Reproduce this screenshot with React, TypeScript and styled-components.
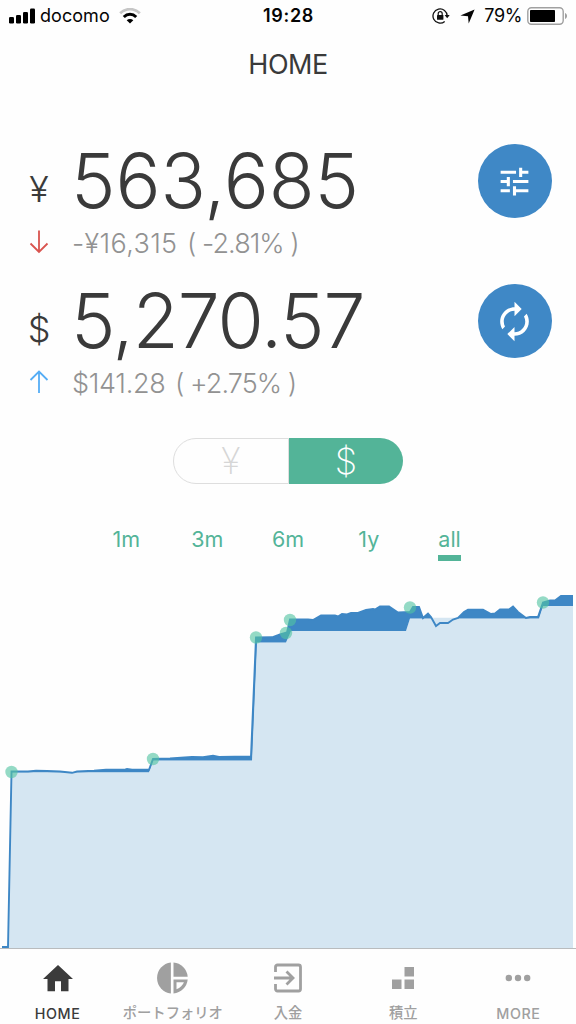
import React from "react";
import styled, { createGlobalStyle } from "styled-components";

const GlobalStyle = createGlobalStyle`
  * { box-sizing: border-box; }
  body { margin: 0; background: #fefefe; font-family: Inter, "Noto Sans CJK JP", sans-serif; }
`;

const Screen = styled.div`
  width: 576px;
  height: 1024px;
  display: flex;
  flex-direction: column;
  overflow: hidden;
  background: #fefefe;
  color: #3a3a3a;
`;

const StatusBar = styled.header`
  height: 32px;
  display: grid;
  grid-template-columns: 1fr auto 1fr;
  align-items: center;
  padding: 0 8px 0 9px;
  color: #050505;
  font-size: 18px;
  line-height: 32px;
`;
const StatusGroup = styled.div<{ $end?: boolean }>`
  display: flex;
  align-items: center;
  justify-content: ${(p) => (p.$end ? "flex-end" : "flex-start")};
  svg { display: block; flex: none; }
`;
const Carrier = styled.span`
  margin: 0 9px 0 5px;
  letter-spacing: 0.05px;
`;
const Clock = styled.span`
  font-weight: 600;
  letter-spacing: 0.7px;
`;
const Percent = styled.span`
  margin: 0 5px 0 9px;
  letter-spacing: -0.4px;
`;

const Title = styled.h1`
  margin: 0;
  height: 64px;
  font-size: 27px;
  font-weight: 400;
  line-height: 65px;
  text-align: center;
  letter-spacing: -0.5px;
`;

const Balances = styled.section`
  display: flex;
  flex-direction: column;
  padding: 44px 24.500px 0 24px;
`;
const Balance = styled.div`
  height: 140px;
  display: flex;
  justify-content: space-between;
`;
const Figures = styled.div`
  display: grid;
  grid-template-columns: 30px auto;
  grid-template-rows: 85px 36px;
  column-gap: 17px;
`;
const Currency = styled.span`
  font-size: 36px;
  font-weight: 300;
  line-height: 98px;
  text-align: center;
`;
const Amount = styled.span<{ $spacing: number }>`
  font-size: 75px;
  font-weight: 300;
  line-height: 82px;
  letter-spacing: ${(p) => p.$spacing}px;
  white-space: nowrap;
`;
const Trend = styled.svg`
  width: 20px;
  height: 24px;
  margin: 5px;
`;
const Change = styled.span<{ $spacing: number }>`
  font-size: 27px;
  font-weight: 300;
  line-height: 37px;
  padding-left: 1px;
  color: #929292;
  letter-spacing: ${(p) => p.$spacing}px;
  white-space: nowrap;
`;
const Rate = styled.span`
  margin-left: 9.500px;
  letter-spacing: -0.95px;
`;
const RoundButton = styled.button`
  width: 74px;
  height: 74px;
  margin-top: 4px;
  padding: 0;
  border: 0;
  border-radius: 50%;
  background: #3f88c6;
  display: flex;
  align-items: center;
  justify-content: center;
`;

const Switch = styled.div`
  height: 46px;
  margin: 18px 0 0 172.500px;
  display: grid;
  grid-template-columns: 116.500px 114px;
  flex: none;
`;
const SwitchHalf = styled.button<{ $on?: boolean }>`
  padding: 0;
  border: ${(p) => (p.$on ? "0" : "1.5px solid #dedede")};
  border-radius: ${(p) => (p.$on ? "0 23px 23px 0" : "23px 0 0 23px")};
  background: ${(p) => (p.$on ? "#53b498" : "#fefefe")};
  color: ${(p) => (p.$on ? "#fff" : "#d6d6d6")};
  font: 250 36px/44px Inter, sans-serif;
`;

const Ranges = styled.nav`
  height: 60px;
  margin-top: 35px;
  padding: 0 86px;
  display: grid;
  grid-template-columns: repeat(5, 1fr);
  justify-items: center;
  align-items: start;
  flex: none;
`;
const Range = styled.a<{ $on?: boolean }>`
  height: 42px;
  border-bottom: 6px solid ${(p) => (p.$on ? "#53b498" : "transparent")};
  color: #53b498;
  font-size: 21.5px;
  line-height: 40px;
`;

const Chart = styled.svg`
  width: 576px;
  height: 369px;
  display: block;
  flex: none;
`;

const TabBar = styled.nav`
  height: 76px;
  display: grid;
  grid-template-columns: repeat(5, 1fr);
  border-top: 1px solid #b9bcbe;
`;
const Tab = styled.a<{ $on?: boolean }>`
  display: flex;
  flex-direction: column;
  align-items: center;
  color: ${(p) => (p.$on ? "#3b3b3b" : "#a0a0a0")};
  font-size: 14.3px;
  font-weight: 500;
  white-space: nowrap;
  svg { width: 36px; height: 36px; margin-top: 11px; flex: none; }
`;
const TabLabel = styled.span<{ $latin?: boolean }>`
  margin-top: ${(p) => (p.$latin ? 7 : 6)}px;
  line-height: 22px;
  letter-spacing: ${(p) => (p.$latin ? 0.6 : 0)}px;
`;

const SignalIcon = () => (
  <svg width="26" height="16" viewBox="0 0 26 16">
    <rect x="0" y="9" width="5" height="6.5" rx="1.3" />
    <rect x="7" y="7" width="5" height="8.5" rx="1.3" />
    <rect x="14" y="4" width="5" height="11.5" rx="1.3" />
    <rect x="21" y="0.5" width="5" height="15" rx="1.3" />
  </svg>
);
const WifiIcon = () => (
  <svg width="22" height="16" viewBox="0 0 22 16" fill="none">
    <path d="M1.2 5.3C6.8-.2 15.2-.2 20.8 5.3" stroke="#c6c6c6" strokeWidth="2.8" />
    <path d="M4.8 9C8.4 5.4 13.6 5.4 17.2 9" stroke="#000" strokeWidth="3" />
    <path d="M7.7 12.200C9.5 10.500 12.5 10.500 14.3 12.200L11 15.4Z" fill="#000" />
  </svg>
);
const LockIcon = () => (
  <svg width="18" height="16" viewBox="0 0 18 16" fill="none">
    <path d="M15.2 8A7.1 7.1 0 1 0 12.7 13.4" stroke="#111" strokeWidth="1.3" />
    <path d="M12.6 7h5.1l-2.5 3.2z" fill="#111" />
    <rect x="5" y="7" width="6.4" height="4.8" rx=".6" fill="#111" />
    <path d="M6.2 7.3V5.7a2 2 0 0 1 4 0v1.6" stroke="#111" strokeWidth="1.2" />
  </svg>
);
const LocationArrow = styled.svg`
  width: 15px;
  height: 15px;
  margin-left: 10px;
`;
const LocationIcon = () => (
  <LocationArrow viewBox="0 0 15 15">
    <path d="M14.6.4 8.7 14.5 8 7.2.4 6.6Z" fill="#050505" />
  </LocationArrow>
);
const BatteryIcon = () => (
  <svg width="41" height="18" viewBox="0 0 41 18">
    <rect x=".8" y=".8" width="35.4" height="16.4" rx="3.6" fill="none" stroke="#a0a0a0" strokeWidth="1.4" />
    <rect x="3" y="3" width="25" height="12" rx=".8" />
    <path d="M38 6v6c1.4-.5 2-1.6 2-3s-.6-2.500-2-3Z" fill="#a0a0a0" />
  </svg>
);

const DownArrow = () => (
  <Trend viewBox="0 0 20 24" fill="none" stroke="#d9544f" strokeWidth="1.8">
    <path d="M10 .5V22M1.500 13.500L10 22L18.500 13.500" />
  </Trend>
);
const UpArrow = () => (
  <Trend viewBox="0 0 20 24" fill="none" stroke="#55adf5" strokeWidth="1.8">
    <path d="M10 23V1.500M1.500 10L10 1.500L18.500 10" />
  </Trend>
);
const TuneIcon = () => (
  <svg width="37" height="37" viewBox="0 0 24 24" fill="#fff">
    <path d="M3 17v2h6v-2H3zM3 5v2h10V5H3zm10 16v-2h8v-2h-8v-2h-2v6h2zM7 9v2H3v2h4v2h2V9H7zm14 4v-2H11v2h10zm-6-4h2V7h4V5h-4V3h-2v6z" />
  </svg>
);
const RefreshIcon = () => (
  <svg width="43" height="43" viewBox="0 0 24 24" fill="#fff">
    <path d="M12 6v3l4-4-4-4v3c-4.420 0-8 3.580-8 8 0 1.570.46 3.030 1.240 4.260L6.700 14.800c-.45-.83-.7-1.790-.7-2.800 0-3.310 2.690-6 6-6zm6.760 1.740L17.300 9.200c.44.840.7 1.790.7 2.800 0 3.310-2.690 6-6 6v-3l-4 4 4 4v-3c4.420 0 8-3.580 8-8 0-1.570-.46-3.030-1.240-4.260z" />
  </svg>
);

const HomeIcon = () => (
  <svg viewBox="0 0 36 36" fill="currentColor">
    <path d="M18 5 33 19h-4.500v12.300h-7.500v-10h-6v10H7.500V19H3Z" />
  </svg>
);
const PortfolioIcon = () => (
  <svg viewBox="0.800 0 36 36" fill="currentColor">
    <path d="M16.700 2.500v31A15.600 15.600 0 0 1 16.700 2.500Z" />
    <path d="M19.300 2.500A15.600 15.600 0 0 1 33.500 16.700H19.300Z" />
    <path fillRule="evenodd" d="M19.300 19.500H33.500A15.600 15.600 0 0 1 19.300 33.500ZM22.300 22.300V29.300Q28 27 29.700 22.300Z" />
  </svg>
);
const DepositIcon = () => (
  <svg viewBox="0 0 36 36" fill="none" stroke="currentColor" strokeWidth="2.800">
    <path d="M5.500 12V7a2 2 0 0 1 2-2h21a2 2 0 0 1 2 2v22a2 2 0 0 1-2 2h-21a2 2 0 0 1-2-2v-5M4 18H22M16.500 11.500 23 18 16.500 24.500" />
  </svg>
);
const BlocksIcon = () => (
  <svg viewBox="0 0 36 36" fill="currentColor">
    <path d="M19.500 7h9.500v9.500h-9.500zM7 19.500h9.500V29H7zM19.500 19.500h9.500V29h-9.500z" />
  </svg>
);
const MoreIcon = () => (
  <svg viewBox="0 0 36 36" fill="currentColor">
    <circle cx="8.800" cy="18" r="3.200" />
    <circle cx="18" cy="18" r="3.200" />
    <circle cx="27.200" cy="18" r="3.200" />
  </svg>
);

const deposits = [[11.500, 772], [153, 759], [256, 637.500], [286, 633], [290, 620], [410, 607.500], [543, 602.500]];

const valueLine =
  "11.500 771.500 28 771.500 36 770.800 47 771 60 771.500 72 772.800 77 771.500 94 770.800 106 769.800 124 769.800 127 769 132 769.800 149 769.800 153 759 170 758.500 192 757 203 757.200 213 755.800 219 757 251 756.500 256 637.500 272 637.300 280 634.500 287 632.500 290 619.500 308 619.500 313 620 321 615.500 335 615.500 338 616.500 342 614 347 614.500 351 613 358 613 366 610 373 609 375 609.500 380 606.500 389 606.500 398 612.500 410 612 413 607 419 607 423 618 428 613.500 431 617 436 626 440 623 448 623 453 619.500 458 618 464 612 468 609.800 483 609.800 491 614 495 613.500 500 609.500 509 609.500 513 606.500 518 612 526 618 530 617 538 617 543 602.500 550 600.500 555 600.500 561 596 573 596";
const principalLine =
  "573 606 543 606 539 618.500 410 618.500 406 631 291 631 286 642.500 257 642.500 252 760.500 153 760.500 149 772.300 11.500 772.300";

const AssetChart = () => (
  <Chart viewBox="0 579 576 369">
    <path fill="#d5e6f2" d={`M573 948L${principalLine}L8 948Z`} />
    <path fill="#3e87c5" d={`M${valueLine} 573 606L${principalLine}Z`} />
    <path fill="#d5e6f2" d="M431 617.800 436 627 440 624 448 624 454 620.500 459 617.800Z" />
    <path fill="none" stroke="#3e87c5" strokeWidth="1.900" d={`M2 947 8 947 11.500 772L${valueLine}`} />
    {deposits.map(([x, y]) => (
      <circle key={x} cx={x} cy={y} r="6.200" fill="#53c3a1" fillOpacity=".62" />
    ))}
  </Chart>
);

export default function App() {
  return (
    <Screen>
      <GlobalStyle />
      <StatusBar>
        <StatusGroup>
          <SignalIcon />
          <Carrier>docomo</Carrier>
          <WifiIcon />
        </StatusGroup>
        <Clock>19:28</Clock>
        <StatusGroup $end>
          <LockIcon />
          <LocationIcon />
          <Percent>79%</Percent>
          <BatteryIcon />
        </StatusGroup>
      </StatusBar>
      <Title>HOME</Title>
      <Balances>
        <Balance>
          <Figures>
            <Currency>¥</Currency>
            <Amount $spacing={0}>563,685</Amount>
            <DownArrow />
            <Change $spacing={0.35}>-¥16,315<Rate>( -2.81% )</Rate></Change>
          </Figures>
          <RoundButton aria-label="Settings"><TuneIcon /></RoundButton>
        </Balance>
        <Balance>
          <Figures>
            <Currency>$</Currency>
            <Amount $spacing={-1}>5,270.57</Amount>
            <UpArrow />
            <Change $spacing={-0.3}>$141.28<Rate>( +2.75% )</Rate></Change>
          </Figures>
          <RoundButton aria-label="Refresh"><RefreshIcon /></RoundButton>
        </Balance>
      </Balances>
      <Switch>
        <SwitchHalf>¥</SwitchHalf>
        <SwitchHalf $on>$</SwitchHalf>
      </Switch>
      <Ranges>
        <Range>1m</Range>
        <Range>3m</Range>
        <Range>6m</Range>
        <Range>1y</Range>
        <Range $on>all</Range>
      </Ranges>
      <AssetChart />
      <TabBar>
        <Tab $on><HomeIcon /><TabLabel $latin>HOME</TabLabel></Tab>
        <Tab><PortfolioIcon /><TabLabel>ポートフォリオ</TabLabel></Tab>
        <Tab><DepositIcon /><TabLabel>入金</TabLabel></Tab>
        <Tab><BlocksIcon /><TabLabel>積立</TabLabel></Tab>
        <Tab><MoreIcon /><TabLabel $latin>MORE</TabLabel></Tab>
      </TabBar>
    </Screen>
  );
}
